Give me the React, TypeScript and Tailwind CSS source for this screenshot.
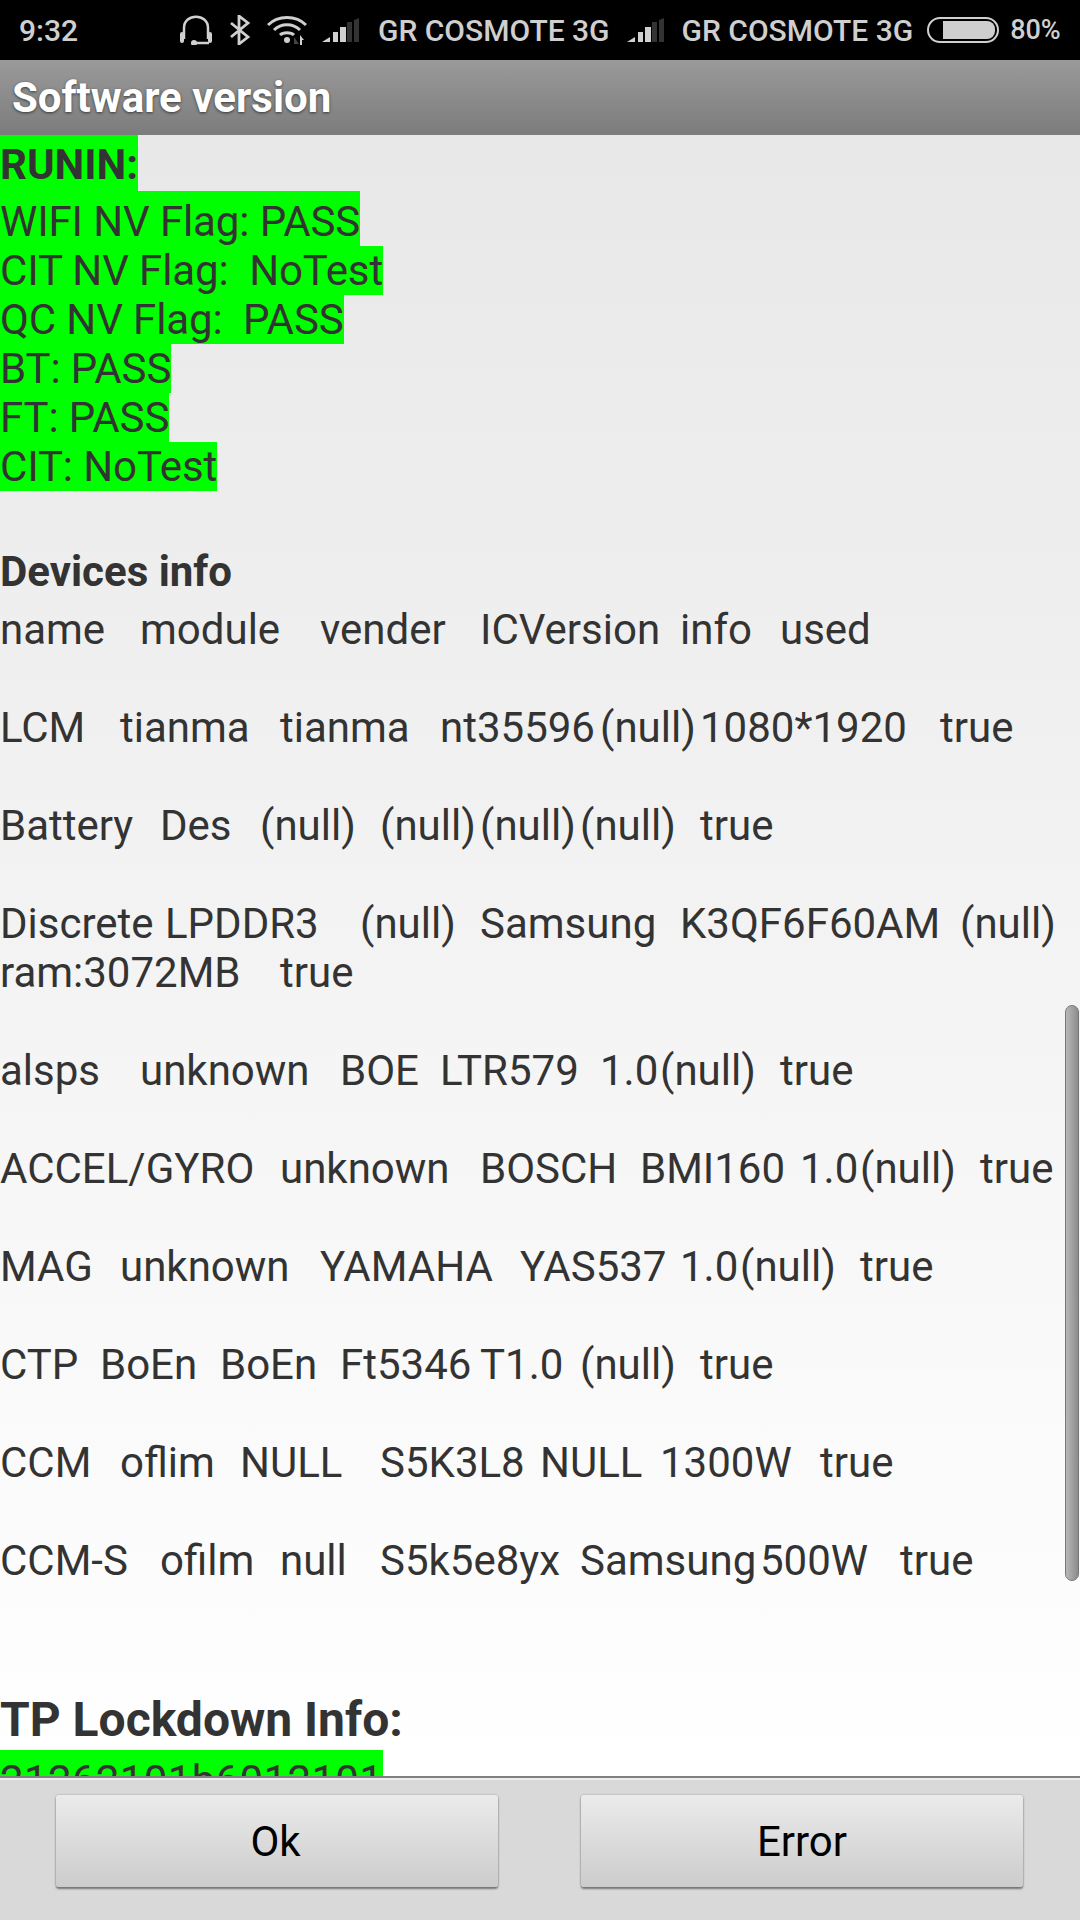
import React from 'react';

const Signal = () => (
  <svg width="37" height="24" viewBox="0 0 37 24" className="shrink-0">
    <path d="M0 24 L8 19 V24 Z" fill="#d0d0d0" />
    <rect x="11" y="14" width="5" height="10" fill="#d0d0d0" />
    <rect x="18" y="9" width="6" height="15" fill="#d0d0d0" />
    <rect x="25" y="4" width="5" height="20" fill="#333333" />
    <path d="M32 2 L37 0 V24 H32 Z" fill="#333333" />
  </svg>
);

const passLines = ['CIT NV Flag:  NoTest', 'QC NV Flag:  PASS', 'BT: PASS', 'FT: PASS', 'CIT: NoTest'];

type Cell = [string, number];

// x position of every column, the phone lays these out on its tab stops
const deviceRows: { cells: Cell[]; gap: boolean }[] = [
  { gap: true, cells: [['name', 0], ['module', 140], ['vender', 320], ['ICVersion', 480], ['info', 680], ['used', 780]] },
  { gap: true, cells: [['LCM', 0], ['tianma', 120], ['tianma', 280], ['nt35596', 440], ['(null)', 600], ['1080*1920', 700], ['true', 940]] },
  { gap: true, cells: [['Battery', 0], ['Des', 160], ['(null)', 260], ['(null)', 380], ['(null)', 480], ['(null)', 580], ['true', 700]] },
  { gap: false, cells: [['Discrete', 0], ['LPDDR3', 165], ['(null)', 360], ['Samsung', 480], ['K3QF6F60AM', 680], ['(null)', 960]] },
  { gap: true, cells: [['ram:3072MB', 0], ['true', 280]] },
  { gap: true, cells: [['alsps', 0], ['unknown', 140], ['BOE', 340], ['LTR579', 440], ['1.0', 600], ['(null)', 660], ['true', 780]] },
  { gap: true, cells: [['ACCEL/GYRO', 0], ['unknown', 280], ['BOSCH', 480], ['BMI160', 640], ['1.0', 800], ['(null)', 860], ['true', 980]] },
  { gap: true, cells: [['MAG', 0], ['unknown', 120], ['YAMAHA', 320], ['YAS537', 520], ['1.0', 680], ['(null)', 740], ['true', 860]] },
  { gap: true, cells: [['CTP', 0], ['BoEn', 100], ['BoEn', 220], ['Ft5346', 340], ['T1.0', 480], ['(null)', 580], ['true', 700]] },
  { gap: true, cells: [['CCM', 0], ['oflim', 120], ['NULL', 240], ['S5K3L8', 380], ['NULL', 540], ['1300W', 660], ['true', 820]] },
  { gap: false, cells: [['CCM-S', 0], ['ofilm', 160], ['null', 280], ['S5k5e8yx', 380], ['Samsung', 580], ['500W', 760], ['true', 900]] },
];

const DeviceRow = ({ cells }: { cells: Cell[] }) => (
  <div className="flex whitespace-nowrap">
    {cells.map(([text, x], i) => (
      <span key={i} className="shrink-0" style={i < cells.length - 1 ? { width: cells[i + 1][1] - x } : undefined}>
        {text}
      </span>
    ))}
  </div>
);

const App = () => {
  return (
    <div className="w-[1080px] h-[1920px] flex flex-col overflow-hidden font-['Roboto',sans-serif] text-[#333333]">
      <div className="h-[60px] shrink-0 bg-black flex items-center pl-[19px] text-[30px] font-medium text-[#cfcfcf] whitespace-pre">
        <span className="w-[161px]">9:32</span>
        <svg width="32" height="30" viewBox="0 0 32 30" fill="none" stroke="#d0d0d0" strokeWidth="2.5" className="shrink-0">
          <path d="M4 24 V13 C4 -2 28 -2 28 13 V24" />
          <path d="M2 19 V26 M30 19 V26" strokeWidth="4" strokeLinecap="round" />
          <path d="M14 28 H29" />
          <circle cx="14" cy="28" r="3" fill="#d0d0d0" stroke="none" />
        </svg>
        <svg width="22" height="30" viewBox="0 0 22 30" fill="none" stroke="#d0d0d0" strokeWidth="2.8" className="ml-[17px] shrink-0">
          <path d="M2 8 L19 22 L10 29 V1 L19 8 L2 22" />
        </svg>
        <svg width="40" height="30" viewBox="0 0 40 30" fill="none" stroke="#d0d0d0" strokeWidth="3" className="ml-[16px] shrink-0">
          <path d="M1 10 C11 0 29 0 39 10" />
          <path d="M7 15 C14 8 26 8 33 15" />
          <path d="M13 20 C16 17 24 17 27 20" />
          <circle cx="20" cy="25" r="3" fill="#d0d0d0" stroke="none" />
          <path d="M27 22 V29 H32 Z" fill="#444444" stroke="none" />
          <path d="M33 20 L37 25 H35 V30 H33 Z" fill="#d0d0d0" stroke="none" />
        </svg>
        <span className="ml-[15px] flex"><Signal /></span>
        <span className="ml-[19px]">GR COSMOTE 3G</span>
        <span className="ml-[17px] flex"><Signal /></span>
        <span className="ml-[18px]">GR COSMOTE 3G</span>
        <div className="ml-[14px] w-[72px] h-[26px] rounded-[13px] border-2 border-[#cfcfcf] flex justify-end items-center pr-[2px] shrink-0">
          <div className="w-[52px] h-[18px] bg-[#cfcfcf] rounded-r-[8px]" />
        </div>
        <span className="ml-[11px] text-[27px]">80%</span>
      </div>

      <div className="h-[75px] shrink-0 bg-gradient-to-b from-[#9a9a9a] to-[#7c7c7c] flex items-center pl-[12px] text-[42px] font-bold text-white [text-shadow:0_1px_3px_rgba(0,0,0,0.6)]">
        Software version
      </div>

      <div className="relative flex-1 overflow-hidden bg-gradient-to-b from-[#e8e8e8] to-white">
        <div className="text-[42px] leading-[49px] whitespace-pre">
          <div className="w-fit bg-[#00ff00] pt-[5px] pb-[2px] font-bold">RUNIN:</div>
          <div className="w-fit bg-[#00ff00] pt-[6px] tracking-[-0.12px]">WIFI NV Flag: PASS</div>
          {passLines.map((line) => (
            <div key={line} className="w-fit bg-[#00ff00] tracking-[-0.12px]">{line}</div>
          ))}
          <div className="h-[49px]" />
          <div className="pt-[7px] font-bold">Devices info</div>
          <div className="pt-[9px]">
            {deviceRows.map((row, i) => (
              <div key={i} className={row.gap ? 'pb-[49px]' : ''}>
                <DeviceRow cells={row.cells} />
              </div>
            ))}
          </div>
          <div className="h-[107px]" />
          <div className="text-[48px] leading-[56px] font-bold">TP Lockdown Info:</div>
          <div className="w-fit mt-[2px] bg-[#00ff00] pt-[6px] tracking-[0.35px]">21262101b6012101</div>
        </div>
        <div className="absolute left-[1065px] top-[870px] w-[14px] h-[576px] rounded-[7px] bg-gradient-to-r from-[#b8b8b8] to-[#8c8c8c] border border-[#777777]" />
      </div>

      <div className="h-[144px] shrink-0 bg-[#d9d9d9] border-t-2 border-t-[#808080] shadow-[inset_0_2px_0_#eeeeee] flex items-start pt-[17px]">
        <button className="ml-[56px] w-[442px] h-[92px] pr-[3px] rounded-[3px] bg-gradient-to-b from-[#ebebeb] to-[#cccccc] text-[42px] text-black shadow-[0_2px_2px_#777777,0_0_2px_#999999]">Ok</button>
        <button className="ml-[83px] w-[442px] h-[92px] rounded-[3px] bg-gradient-to-b from-[#ebebeb] to-[#cccccc] text-[42px] text-black shadow-[0_2px_2px_#777777,0_0_2px_#999999]">Error</button>
      </div>
    </div>
  );
};

export default App;
